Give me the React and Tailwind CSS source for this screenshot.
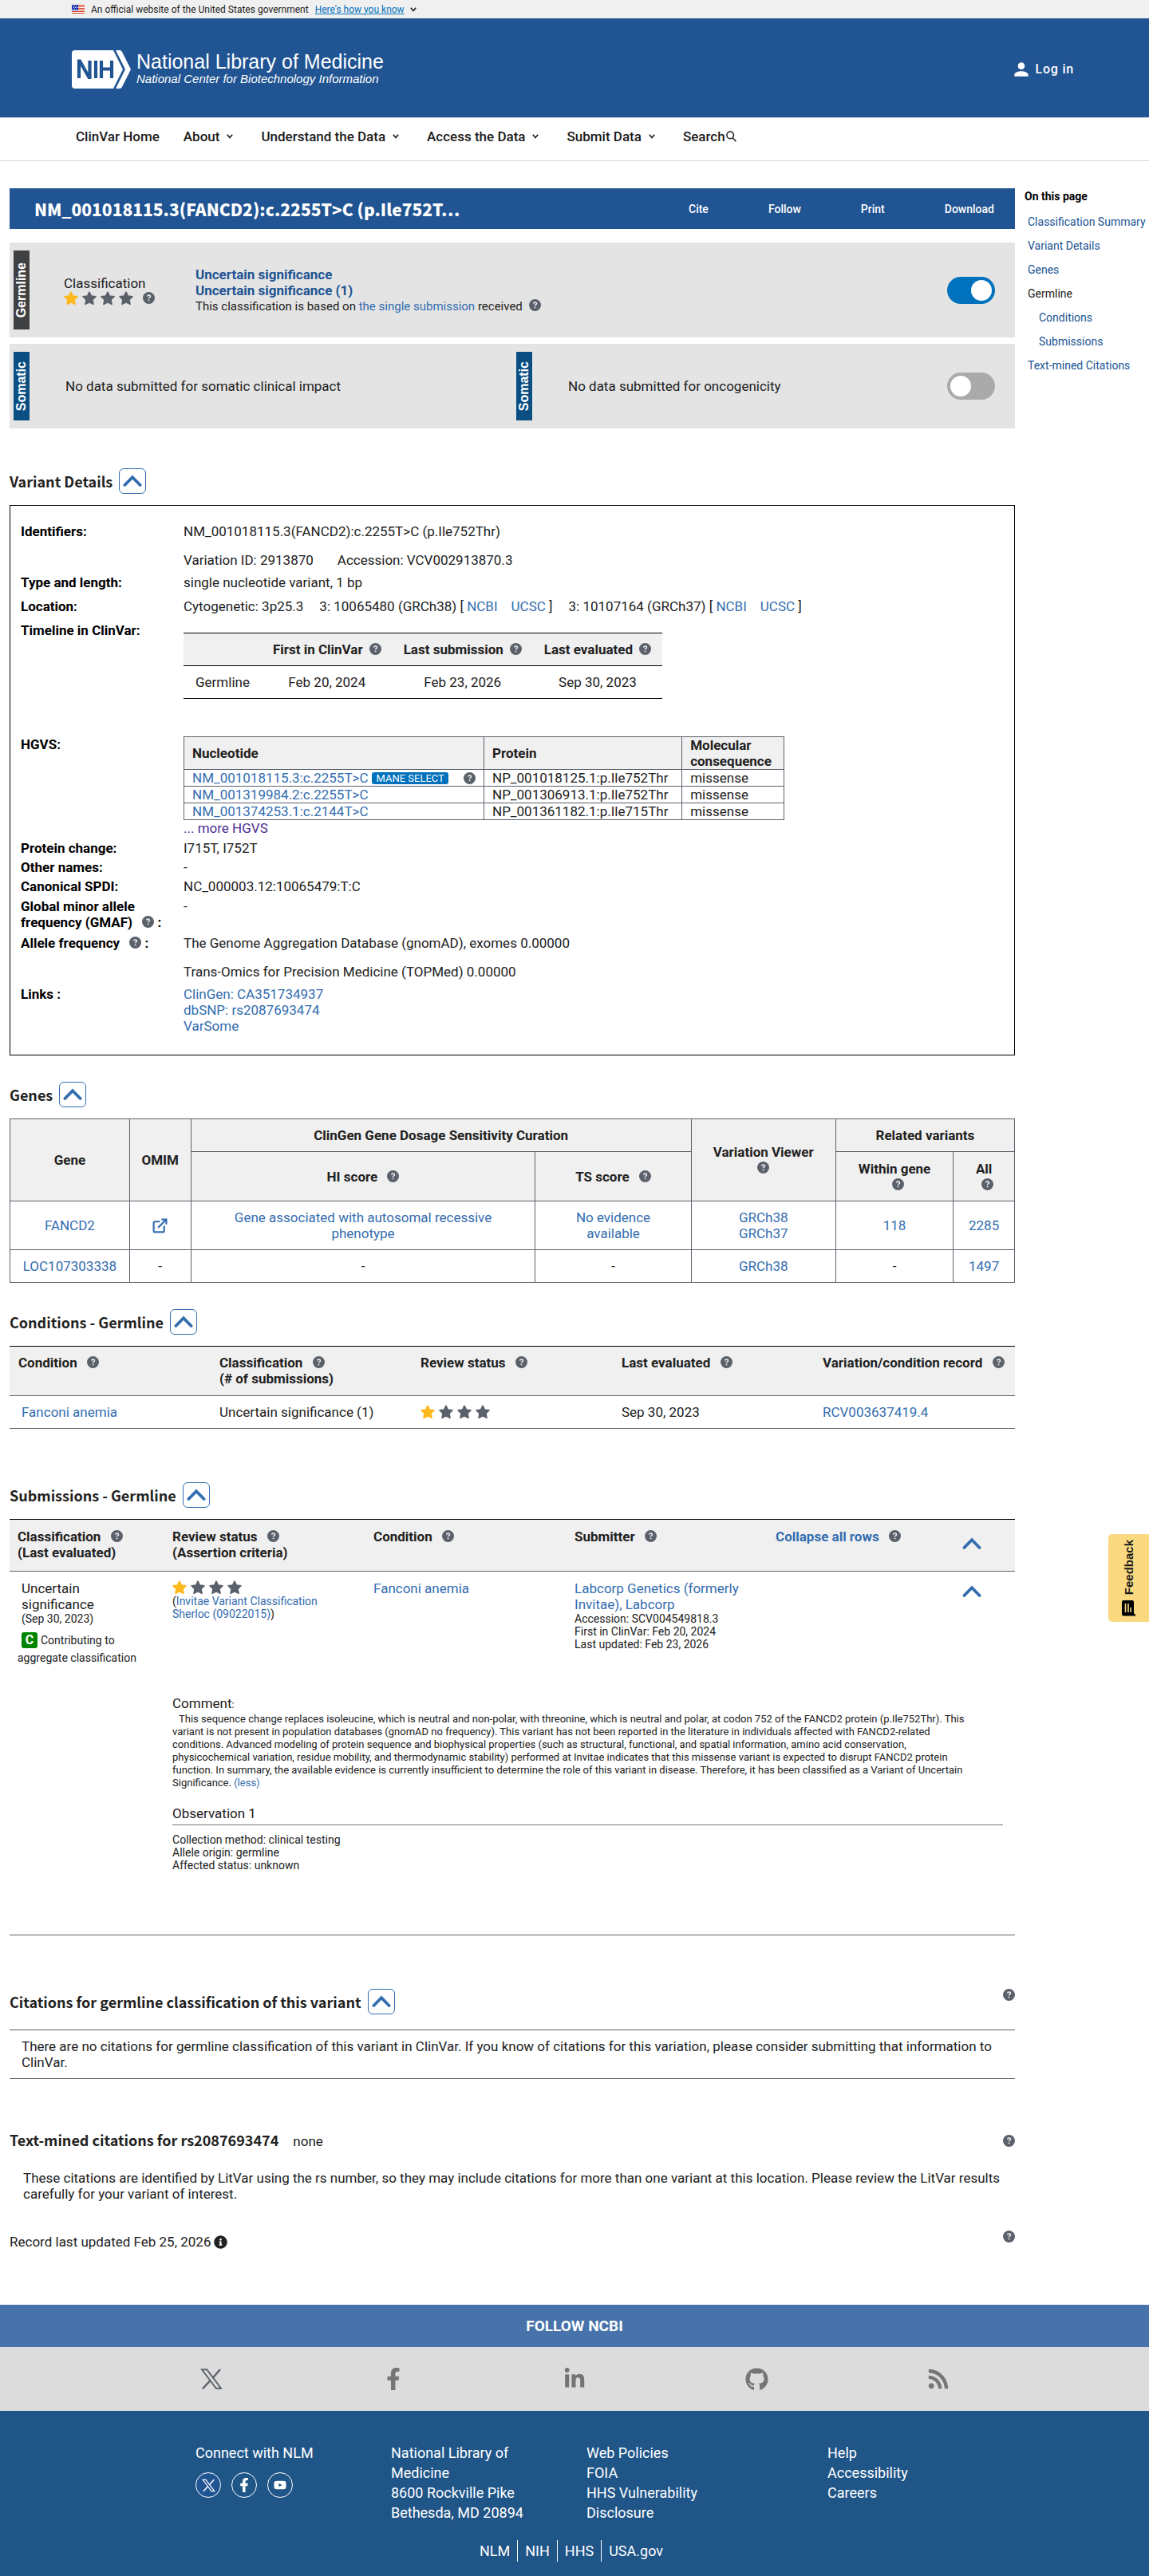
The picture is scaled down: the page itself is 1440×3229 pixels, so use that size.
import React from "react";
import { FaInfoCircle, FaFacebookF, FaLinkedinIn, FaGithub, FaYoutube, FaRss } from "react-icons/fa";
import { FiExternalLink } from "react-icons/fi";
import { MdPerson } from "react-icons/md";

const heading = "font-['Noto_Sans_CJK_SC','Noto_Sans',sans-serif] font-bold";

function Help({ className = "ml-2" }) {
  return (
    <button type="button" aria-label="Help" className={`inline-block align-[-1px] ${className}`}>
      <svg width="15" height="15" viewBox="0 0 15 15" fill="none" className="block" aria-hidden="true">
        <circle cx="7.5" cy="7.5" r="7.5" fill="#5b616b" />
        <path d="M5.600 5.600q.2-1.700 2-1.700t1.900 1.500q0 1-1 1.500-1 .5-1 1.400" stroke="#f0f0f0" strokeWidth="1.500" />
        <path d="M6.700 9.600h1.700v1.600H6.700z" fill="#f0f0f0" />
      </svg>
    </button>
  );
}

function A({ children, className = "text-[#336daf]" }) {
  return <a href="#" className={className}>{children}</a>;
}

function Caret() {
  return (
    <svg width="8" height="6" viewBox="0 0 8 6" fill="none" stroke="currentColor" strokeWidth="1.6" aria-hidden="true">
      <path d="M0.8 0.8 4 4.6 7.2 0.8" />
    </svg>
  );
}

function Chevron({ width = 24 }) {
  return (
    <svg width={width} height="16" viewBox="0 0 24 16" fill="none" stroke="#336daf" strokeWidth="3.8" strokeLinecap="round" aria-hidden="true">
      <path d="M2.4 13 12 3.2 21.6 13" />
    </svg>
  );
}

function Star({ className = "text-[#5b616b]" }) {
  return (
    <svg width="18" height="18" viewBox="0 0 18 18" fill="currentColor" stroke="currentColor" strokeWidth="1.6" strokeLinejoin="round" className={className} aria-hidden="true">
      <path d="M9 1.200 11.400 6 17 6.800 13 10.800 14 16.300 9 13.800 4 16.300 5 10.800 1 6.800 6.600 6z" />
    </svg>
  );
}

function Stars() {
  return (
    <span role="img" aria-label="1 of 4 stars" className="inline-flex gap-[5px]">
      <Star className="text-[#fdb81e]" />
      <Star />
      <Star />
      <Star />
    </span>
  );
}

function SectionHead({ title }) {
  return (
    <div className="flex h-8 items-center gap-2">
      <h2 className={`${heading} text-lg leading-8 text-[#212121]`}>{title}</h2>
      <button type="button" aria-label={`Collapse ${title}`} className="flex h-8 w-[34px] items-center justify-center rounded-[6px] border border-[#336daf]">
        <Chevron />
      </button>
    </div>
  );
}

function Tab({ children, className }) {
  return (
    <div className={`flex w-5 shrink-0 items-center justify-center self-stretch font-['Liberation_Sans',sans-serif] text-base font-bold leading-5 text-white ${className}`}>
      <span className="rotate-180 [writing-mode:vertical-rl]">{children}</span>
    </div>
  );
}

function Toggle({ label, on }) {
  return (
    <label className="relative mr-[25px] block h-[34px] w-[60px] shrink-0">
      <input
        type="checkbox"
        role="switch"
        aria-label={label}
        defaultChecked={on}
        className="block h-[34px] w-[60px] appearance-none rounded-full bg-[#aaaaaa] before:ml-1 before:mt-1 before:block before:size-[26px] before:rounded-full before:bg-white before:content-[''] checked:bg-[#0071bc] checked:before:ml-[30px]"
      />
    </label>
  );
}

function Row({ label, children, className }) {
  return (
    <div className={`grid grid-cols-[204px_minmax(0,1fr)] ${className}`}>
      <dt className="font-bold text-black">{label}</dt>
      <dd>{children}</dd>
    </div>
  );
}

function XLogo({ size }) {
  return (
    <svg width={size} height={size} viewBox="0 0 28 26" fill="none" stroke="currentColor" strokeWidth="1.9" aria-hidden="true">
      <path d="M2 1.2h6.2L26 24.8h-6.2z" />
      <path d="M25 1 15.8 11.5M12.2 15.2 3 25.2" strokeWidth="2.4" />
    </svg>
  );
}

function Flag() {
  return (
    <svg width="16" height="11" viewBox="0 0 16 11" aria-hidden="true">
      <path fill="#fff" d="M0 0h16v11H0z" />
      <path fill="#db3e1f" d="M0 0h16v1H0zM0 2h16v1H0zM0 4h16v1H0zM0 6h16v1H0zM0 8h16v1H0zM0 10h16v1H0z" />
      <path fill="#1e33b1" d="M0 0h8v7H0z" />
      <path fill="#fff" d="M1 1h1v1H1zM3 1h1v1H3zM5 1h1v1H5zM2 3h1v1H2zM4 3h1v1H4zM6 3h1v1H6zM1 5h1v1H1zM3 5h1v1H3zM5 5h1v1H5z" />
    </svg>
  );
}

const nav = ["About", "Understand the Data", "Access the Data", "Submit Data"];

function Header() {
  return (
    <header>
      <div className="flex h-[23px] items-center bg-[#f0f0f0] pl-[90px] text-xs text-[#1b1b1b]">
        <Flag />
        <p className="ml-2">An official website of the United States government</p>
        <button type="button" className="ml-2 flex items-center gap-[7px]">
          <span className="text-[#0071bc] underline">Here's how you know</span>
          <Caret />
        </button>
      </div>
      <div className="flex h-[124px] items-center justify-between bg-[#205493] pl-[90px] pr-[94px] text-white">
        <a href="#" className="flex items-center gap-[7px] pt-1 font-['Liberation_Sans',sans-serif]">
          <svg width="74" height="48" viewBox="0 0 74 48" role="img" aria-label="NIH">
            <path fill="#fff" d="M4 0h48l12 24-12 24H4a4 4 0 0 1-4-4V4a4 4 0 0 1 4-4z" />
            <path fill="#fff" d="M55 0h5q2 0 3 2l11 22-11 22q-1 2-3 2h-5l12-24z" />
            <g fill="none" stroke="#205493" strokeWidth="4.200">
              <path d="M9 35V13.500h1L21.500 34h1V13M30 13v22M37 13v22M50 13v22M37 23.500h13" />
            </g>
          </svg>
          <span>
            <span className="block text-[25px] leading-6">National Library of Medicine</span>
            <span className="block text-[15px] italic leading-5">National Center for Biotechnology Information</span>
          </span>
        </a>
        <a href="#" className="flex items-center gap-1 pt-1 text-base font-medium tracking-wider">
          <MdPerson size={26} />
          Log in
        </a>
      </div>
      <nav className="flex h-[55px] items-center border-y border-[#d6d7d9] pl-[95px] pb-2 text-[17px] font-medium text-[#1b1b1b]">
        <a href="#" className="mr-[30px]">ClinVar Home</a>
        {nav.map((label) => (
          <button key={label} type="button" className="mr-[35px] flex items-center gap-[9px]">
            {label}
            <Caret />
          </button>
        ))}
        <a href="#" className="flex items-center gap-px">
          Search
          <svg width="13" height="14" viewBox="0 0 13 14" fill="none" stroke="currentColor" strokeWidth="1.5" aria-hidden="true">
            <circle cx="5.2" cy="5.4" r="4.3" />
            <path d="m8.2 8.8 4.2 4.4" />
          </svg>
        </a>
      </nav>
    </header>
  );
}

function Summary() {
  return (
    <section>
      <div className="flex h-[51px] items-center justify-between bg-[#205493] pl-[31px] pr-[26px] text-white">
        <h1 className="font-['Noto_Sans_CJK_SC','Noto_Sans',sans-serif] text-[21px] font-black">NM_001018115.3(FANCD2):c.2255T&gt;C (p.Ile752T…</h1>
        <div className="flex gap-[75px] text-sm font-medium">
          <button type="button">Cite</button>
          <button type="button">Follow</button>
          <button type="button">Print</button>
          <button type="button">Download</button>
        </div>
      </div>
      <div className="mt-[17px] flex h-[119px] items-center bg-[#e4e4e4] py-[10px] pl-[5px]">
        <Tab className="bg-[#3e4042]">Germline</Tab>
        <div className="ml-[43px] w-[165px]">
          <p>Classification</p>
          <div className="flex items-center">
            <Stars />
            <Help className="ml-3" />
          </div>
        </div>
        <div className="flex-1">
          <p className="font-bold"><A className="text-[#205493]">Uncertain significance</A></p>
          <p className="font-bold"><A className="text-[#205493]">Uncertain significance (1)</A></p>
          <p className="text-[15px] leading-5">This classification is based on <A>the single submission</A> received<Help /></p>
        </div>
        <Toggle label="Germline" on />
      </div>
      <div className="mt-2 flex h-[106px] items-center bg-[#e4e4e4] py-[10px] pl-[5px]">
        <div className="flex flex-1 items-center self-stretch">
          <Tab className="bg-[#0b4f82]">Somatic</Tab>
          <p className="ml-[45px]">No data submitted for somatic clinical impact</p>
        </div>
        <div className="flex w-[540px] items-center self-stretch">
          <Tab className="bg-[#0b4f82]">Somatic</Tab>
          <p className="ml-[45px]">No data submitted for oncogenicity</p>
        </div>
        <Toggle label="Somatic" />
      </div>
    </section>
  );
}

const hgvs = [
  ["NM_001018115.3:c.2255T>C", "NP_001018125.1:p.Ile752Thr", true],
  ["NM_001319984.2:c.2255T>C", "NP_001306913.1:p.Ile752Thr", false],
  ["NM_001374253.1:c.2144T>C", "NP_001361182.1:p.Ile715Thr", false],
];

function VariantDetails() {
  const th = "border border-[#5b616b] px-[10px] text-left font-bold leading-5";
  const td = "h-[21px] border border-[#5b616b] px-[10px] leading-5";
  return (
    <section className="mt-[50px]">
      <SectionHead title="Variant Details" />
      <dl className="mt-[14px] border border-black px-[13px] pb-[26px] pt-[22px]">
        <Row label="Identifiers:" className="h-16">
          <p className="mb-4">NM_001018115.3(FANCD2):c.2255T&gt;C (p.Ile752Thr)</p>
          <p><span className="mr-[30px]">Variation ID: 2913870</span>Accession: VCV002913870.3</p>
        </Row>
        <Row label="Type and length:" className="h-[30px]">single nucleotide variant, 1 bp</Row>
        <Row label="Location:" className="h-[30px]">
          <span className="mr-5">Cytogenetic: 3p25.3</span>
          <span className="mr-5">3: 10065480 (GRCh38) [ <A>NCBI</A><span className="inline-block w-[17px]" /><A>UCSC</A> ]</span>
          <span>3: 10107164 (GRCh37) [ <A>NCBI</A><span className="inline-block w-[17px]" /><A>UCSC</A> ]</span>
        </Row>
        <Row label="Timeline in ClinVar:" className="h-[143px]">
          <table className="mt-[13px] border-collapse border-y border-black text-center">
            <thead>
              <tr className="h-[41px] border-b border-black bg-[#f0f0f0] font-bold">
                <td className="px-[15px]" />
                <th className="px-[14px]">First in ClinVar<Help /></th>
                <th className="px-[14px]">Last submission<Help /></th>
                <th className="px-[14px]">Last evaluated<Help /></th>
              </tr>
            </thead>
            <tbody>
              <tr className="h-[41px]">
                <td className="px-[15px]">Germline</td>
                <td>Feb 20, 2024</td>
                <td>Feb 23, 2026</td>
                <td>Sep 30, 2023</td>
              </tr>
            </tbody>
          </table>
        </Row>
        <Row label="HGVS:" className="h-[130px]">
          <table className="w-[753px] table-fixed border-collapse">
            <colgroup><col className="w-[50%]" /><col className="w-[33%]" /><col /></colgroup>
            <thead>
              <tr className="h-10 bg-[#f0f0f0]">
                <th className={th}>Nucleotide</th>
                <th className={th}>Protein</th>
                <th className={th}>Molecular consequence</th>
              </tr>
            </thead>
            <tbody>
              {hgvs.map(([n, p, mane]) => (
                <tr key={n}>
                  <td className={td}>
                    <div className="flex items-center">
                      <A>{n}</A>
                      {mane && <span className="ml-[5px] rounded-[3px] bg-[#0071bc] px-[5px] text-[13px] leading-[15px] text-white">MANE SELECT</span>}
                      {mane && <Help className="ml-auto" />}
                    </div>
                  </td>
                  <td className={td}>{p}</td>
                  <td className={td}>missense</td>
                </tr>
              ))}
            </tbody>
          </table>
          <A className="text-[#4c2c92]">... more HGVS</A>
        </Row>
        <Row label="Protein change:" className="h-6">I715T, I752T</Row>
        <Row label="Other names:" className="h-6">-</Row>
        <Row label="Canonical SPDI:" className="h-[25px]">NC_000003.12:10065479:T:C</Row>
        <Row label={<>Global minor allele<br />frequency (GMAF) <Help /> :</>} className="h-[46px]">-</Row>
        <Row label={<>Allele frequency <Help /> :</>} className="h-16">
          <p className="mb-4">The Genome Aggregation Database (gnomAD), exomes 0.00000</p>
          <p>Trans-Omics for Precision Medicine (TOPMed) 0.00000</p>
        </Row>
        <Row label="Links :">
          <A className="block text-[#336daf]">ClinGen: CA351734937</A>
          <A className="block text-[#336daf]">dbSNP: rs2087693474</A>
          <A className="block text-[#336daf]">VarSome</A>
        </Row>
      </dl>
    </section>
  );
}

function Genes() {
  const c = "border border-[#5b616b] px-4";
  const wide = "border border-[#5b616b] px-5";
  return (
    <section className="mt-[33px]">
      <SectionHead title="Genes" />
      <table className="mt-[14px] w-full table-fixed border-collapse text-center leading-5">
        <colgroup>
          <col className="w-[11.9%]" /><col className="w-[6.1%]" /><col className="w-[34.3%]" /><col className="w-[15.5%]" /><col className="w-[14.4%]" /><col className="w-[11.7%]" /><col className="w-[6.1%]" />
        </colgroup>
        <thead className="bg-[#f0f0f0]">
          <tr className="h-[41px]">
            <th className={c} rowSpan={2}>Gene</th>
            <th className="border border-[#5b616b]" rowSpan={2}>OMIM</th>
            <th className={c} colSpan={2}>ClinGen Gene Dosage Sensitivity Curation</th>
            <th className={c} rowSpan={2}>Variation Viewer<div><Help className="" /></div></th>
            <th className={c} colSpan={2}>Related variants</th>
          </tr>
          <tr className="h-[62px]">
            <th className={c}>HI score <Help /></th>
            <th className={c}>TS score <Help /></th>
            <th className={c}>Within gene<div><Help /></div></th>
            <th className={c}>All<div><Help /></div></th>
          </tr>
        </thead>
        <tbody>
          <tr className="h-[61px]">
            <td className={c}><A>FANCD2</A></td>
            <td className={c}><a href="#" aria-label="OMIM record" className="inline-block align-middle text-[#336daf]"><FiExternalLink size={21} strokeWidth={2.5} /></a></td>
            <td className={wide}><A>Gene associated with autosomal recessive phenotype</A></td>
            <td className={wide}><A>No evidence available</A></td>
            <td className={c}><A>GRCh38</A><br /><A>GRCh37</A></td>
            <td className={c}><A>118</A></td>
            <td className={c}><A>2285</A></td>
          </tr>
          <tr className="h-[41px]">
            <td className="border border-[#5b616b]"><A>LOC107303338</A></td>
            <td className={c}>-</td>
            <td className={c}>-</td>
            <td className={c}>-</td>
            <td className={c}><A>GRCh38</A></td>
            <td className={c}>-</td>
            <td className={c}><A>1497</A></td>
          </tr>
        </tbody>
      </table>
    </section>
  );
}

function Conditions() {
  const th = "px-[11px] pt-[10px] align-top";
  return (
    <section className="mt-[33px]">
      <SectionHead title="Conditions - Germline" />
      <table className="mt-[14px] w-full table-fixed border-collapse border-y border-b-[#5b616b] border-t-black text-left leading-5">
        <thead>
          <tr className="h-[62px] border-b border-[#5b616b] bg-[#f0f0f0]">
            <th className={th}>Condition <Help /></th>
            <th className={th}>Classification <Help /><br />(# of submissions)</th>
            <th className={th}>Review status <Help /></th>
            <th className={th}>Last evaluated <Help /></th>
            <th className={`${th} whitespace-nowrap`}>Variation/condition record <Help /></th>
          </tr>
        </thead>
        <tbody>
          <tr className="h-[41px]">
            <td className="px-[15px]"><A>Fanconi anemia</A></td>
            <td className="px-[11px]">Uncertain significance (1)</td>
            <td className="px-[11px]"><span className="flex"><Stars /></span></td>
            <td className="px-[11px]">Sep 30, 2023</td>
            <td className="px-[11px]"><A>RCV003637419.4</A></td>
          </tr>
        </tbody>
      </table>
    </section>
  );
}

function Submissions() {
  const cell = "px-[10px] pt-[11px] align-top";
  return (
    <section className="mt-[67px]">
      <SectionHead title="Submissions - Germline" />
      <table className="mt-[14px] w-full table-fixed border-collapse border-y border-b-[#5b616b] border-t-black text-left leading-5">
        <colgroup>
          <col className="w-[15.4%]" /><col className="w-[20%]" /><col className="w-[20%]" /><col className="w-[20%]" /><col className="w-[17%]" /><col />
        </colgroup>
        <thead>
          <tr className="h-[65px] border-b border-[#5b616b] bg-[#f0f0f0]">
            <th className={cell}>Classification <Help /><br />(Last evaluated)</th>
            <th className={cell}>Review status <Help /><br />(Assertion criteria)</th>
            <th className={cell}>Condition <Help /></th>
            <th className={cell}>Submitter <Help /></th>
            <th className={cell}><button type="button" className="font-bold text-[#336daf]">Collapse all rows</button> <Help /></th>
            <th className="px-[28px] pt-[22px] align-top"><button type="button" aria-label="Collapse all" className="block"><Chevron width={28} /></button></th>
          </tr>
        </thead>
        <tbody>
          <tr className="h-[155px]">
            <td className={cell}>
              <p className="pl-[5px]">Uncertain<br />significance</p>
              <p className="pl-[5px] text-sm leading-4">(Sep 30, 2023)</p>
              <div className="mt-2 text-sm leading-[22px]">
                <p className="flex items-center gap-1 pl-[5px]">
                  <span className="w-5 rounded-[3px] bg-[#008500] text-center text-base font-bold leading-5 text-white">C</span>
                  <span>Contributing to</span>
                </p>
                <p>aggregate classification</p>
              </div>
            </td>
            <td className={cell}>
              <span className="flex"><Stars /></span>
              <p className="text-sm leading-4">(<A>Invitae Variant Classification Sherloc (09022015)</A>)</p>
            </td>
            <td className={cell}><A>Fanconi anemia</A></td>
            <td className={cell}>
              <A>Labcorp Genetics (formerly Invitae), Labcorp</A>
              <p className="text-sm leading-4">Accession: SCV004549818.3<br />First in ClinVar: Feb 20, 2024<br />Last updated: Feb 23, 2026</p>
            </td>
            <td />
            <td className="px-[28px] pt-[17px] align-top"><button type="button" aria-label="Collapse row" className="block"><Chevron width={28} /></button></td>
          </tr>
          <tr className="h-[301px]">
            <td />
            <td colSpan={5} className="pl-[10px] pr-[15px] align-top">
              <p>Comment<span className="text-[13px]">:</span></p>
              <p className="pr-[44px] indent-2 text-[13px] leading-4">
                This sequence change replaces isoleucine, which is neutral and non-polar, with threonine, which is neutral and polar, at codon 752 of the FANCD2 protein (p.Ile752Thr). This variant is not present in population databases (gnomAD no frequency). This variant has not been reported in the literature in individuals affected with FANCD2-related conditions. Advanced modeling of protein sequence and biophysical properties (such as structural, functional, and spatial information, amino acid conservation, physicochemical variation, residue mobility, and thermodynamic stability) performed at Invitae indicates that this missense variant is expected to disrupt FANCD2 protein function. In summary, the available evidence is currently insufficient to determine the role of this variant in disease. Therefore, it has been classified as a Variant of Uncertain Significance. <A>(less)</A>
              </p>
              <h3 className="mt-5 border-b border-[#757575] pb-1">Observation 1</h3>
              <p className="mt-[10px] text-sm leading-4">Collection method: clinical testing<br />Allele origin: germline<br />Affected status: unknown</p>
            </td>
          </tr>
        </tbody>
      </table>
    </section>
  );
}

function Citations() {
  return (
    <section className="mt-[67px]">
      <div className="flex items-start justify-between">
        <SectionHead title="Citations for germline classification of this variant" />
        <Help className="" />
      </div>
      <p className="mt-[19px] border-y border-[#5b616b] px-[15px] py-[10px]">There are no citations for germline classification of this variant in ClinVar. If you know of citations for this variation, please consider submitting that information to ClinVar.</p>
      <div className="mt-[67px] flex h-5 items-center justify-between">
        <h2 className={`${heading} text-lg text-[#212121]`}>Text-mined citations for rs2087693474<span className="ml-[18px] font-['Roboto',sans-serif] text-[17px] font-normal">none</span></h2>
        <Help className="" />
      </div>
      <p className="mt-[27px] px-[17px]">These citations are identified by LitVar using the rs number, so they may include citations for more than one variant at this location. Please review the LitVar results carefully for your variant of interest.</p>
      <div className="mt-[36px] flex items-start justify-between">
        <p className="flex items-center gap-1 pt-1">Record last updated Feb 25, 2026 <FaInfoCircle size={17} /></p>
        <Help className="" />
      </div>
    </section>
  );
}

function OnThisPage() {
  return (
    <nav className="w-[168px] shrink-0 whitespace-nowrap pl-3 text-sm leading-5">
      <h2 className="font-bold text-black">On this page</h2>
      <ul className="mt-3 space-y-[10px] pl-1">
        <li><A className="text-[#205493]">Classification Summary</A></li>
        <li><A className="text-[#205493]">Variant Details</A></li>
        <li><A className="text-[#205493]">Genes</A></li>
        <li>Germline</li>
        <li className="pl-[14px]"><A className="text-[#205493]">Conditions</A></li>
        <li className="pl-[14px]"><A className="text-[#205493]">Submissions</A></li>
        <li><A className="text-[#205493]">Text-mined Citations</A></li>
      </ul>
    </nav>
  );
}

function Footer() {
  return (
    <footer>
      <h2 className="flex h-[53px] items-center justify-center bg-[#4773aa] text-[19px] font-bold text-white">FOLLOW NCBI</h2>
      <div className="flex h-20 items-center justify-between bg-[#dcdcdc] pl-[251px] pr-[250px] text-[#757575]">
        <a href="#" aria-label="X" className="text-[#5b616b]"><XLogo size={28} /></a>
        <a href="#" aria-label="Facebook"><FaFacebookF size={28} /></a>
        <a href="#" aria-label="LinkedIn"><FaLinkedinIn size={28} /></a>
        <a href="#" aria-label="GitHub"><FaGithub size={29} /></a>
        <a href="#" aria-label="RSS"><FaRss size={28} /></a>
      </div>
      <div className="bg-[#205588] pb-[19px] pt-10 text-lg leading-[25px] text-white">
        <div className="flex pl-[245px]">
          <div className="w-[245px]">
            <p>Connect with NLM</p>
            <div className="mt-3 flex gap-[13px]">
              <a href="#" aria-label="NLM on X" className="flex size-8 items-center justify-center rounded-full border border-white bg-[#205493]"><XLogo size={17} /></a>
              <a href="#" aria-label="NLM on Facebook" className="flex size-8 items-center justify-center rounded-full border border-white"><FaFacebookF size={18} /></a>
              <a href="#" aria-label="NLM on YouTube" className="flex size-8 items-center justify-center rounded-full border border-white"><FaYoutube size={16} /></a>
            </div>
          </div>
          <address className="w-[245px] not-italic">National Library of<br />Medicine<br />8600 Rockville Pike<br />Bethesda, MD 20894</address>
          <ul className="w-[302px]">
            <li><A className="text-white">Web Policies</A></li>
            <li><A className="text-white">FOIA</A></li>
            <li><A className="text-white">HHS Vulnerability<br />Disclosure</A></li>
          </ul>
          <ul>
            <li><A className="text-white">Help</A></li>
            <li><A className="text-white">Accessibility</A></li>
            <li><A className="text-white">Careers</A></li>
          </ul>
        </div>
        <div className="mt-[22px] flex justify-center divide-x divide-white pr-2 leading-[27px]">
          <a href="#" className="px-[9px]">NLM</a>
          <a href="#" className="px-[9px]">NIH</a>
          <a href="#" className="px-[9px]">HHS</a>
          <a href="#" className="px-[9px]">USA.gov</a>
        </div>
      </div>
    </footer>
  );
}

export default function App() {
  return (
    <div className="relative bg-white font-['Roboto',sans-serif] text-[17px] leading-5 text-[#212121]">
      <Header />
      <div className="flex pb-[69px] pl-3 pt-[34px]">
        <main className="min-w-0 flex-1">
          <Summary />
          <VariantDetails />
          <Genes />
          <Conditions />
          <Submissions />
          <Citations />
        </main>
        <OnThisPage />
      </div>
      <Footer />
      <button type="button" className="absolute right-0 top-[1923px] flex h-[110px] w-[51px] flex-col items-center justify-center gap-[7px] rounded-l-[5px] bg-[#fad980] font-['Liberation_Sans',sans-serif] text-[15px] font-bold leading-5 text-[#1b1b1b]">
        <span className="rotate-180 [writing-mode:vertical-rl]">Feedback</span>
        <svg width="18" height="20" viewBox="0 0 18 20" aria-hidden="true">
          <path fill="#000" d="M2 0h11q2 0 2 2v14l3 3.500H2q-2 0-2-2V2q0-2 2-2z" />
          <path stroke="#fad980" strokeWidth="1.600" d="M4.500 4v11M8 4v11M11.200 9v6" />
        </svg>
      </button>
    </div>
  );
}
